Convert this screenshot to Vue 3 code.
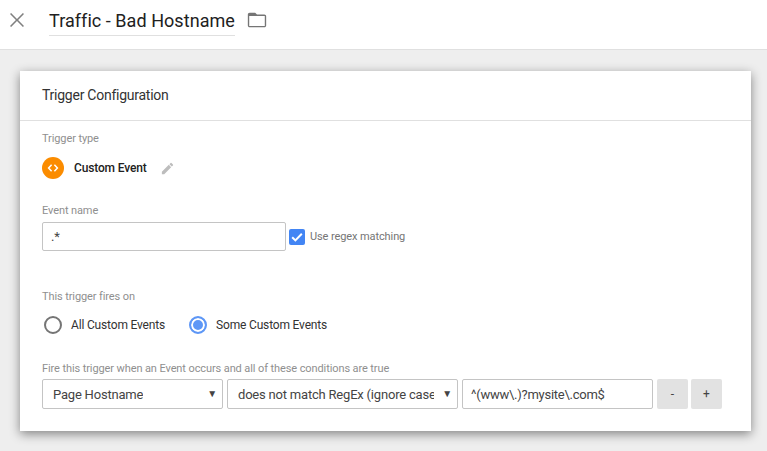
<template>
  <div class="page">
    <header class="top-bar">
      <button class="close-btn" aria-label="Close">
        <svg width="24" height="24" viewBox="0 0 24 24"><path d="M19 6.100 17.900 5 12 10.900 6.100 5 5 6.100 10.900 12 5 17.900 6.100 19 12 13.100 17.900 19 19 17.900 13.100 12z" fill="#808080" /></svg>
      </button>
      <div class="title">Traffic - Bad Hostname</div>
      <svg class="folder" width="22" height="22" viewBox="0 0 24 24"><path d="M20 6h-8l-2-2H4c-1.100 0-1.990.9-1.990 2L2 18c0 1.100.9 2 2 2h16c1.100 0 2-.9 2-2V8c0-1.100-.9-2-2-2zm.5 12.500H3.500V7.500h17v11z" fill="#757575" /></svg>
    </header>

    <main class="content">
      <section class="card">
        <h2 class="card-title">Trigger Configuration</h2>
        <div class="card-body">
          <div class="label">Trigger type</div>
          <div class="type-row">
            <span class="type-icon">
              <svg width="12" height="12" viewBox="0 0 12 12"><path d="M4.600 2.800 1.600 6l3 3.200M7.400 2.800l3 3.200-3 3.200" fill="none" stroke="#fff" stroke-width="1.500" /></svg>
            </span>
            <span class="type-name">Custom Event</span>
            <svg class="pencil" width="15" height="15" viewBox="0 0 24 24"><path d="M3 17.250V21h3.750L17.810 9.940l-3.750-3.750L3 17.250zM20.710 7.040a1 1 0 0 0 0-1.410l-2.340-2.340a1 1 0 0 0-1.410 0l-1.830 1.830 3.750 3.750 1.830-1.830z" fill="#bdbdbd" /></svg>
          </div>

          <div class="label event-label">Event name</div>
          <div class="event-row">
            <div class="field event-field">.*</div>
            <span class="checkbox">
              <svg width="16" height="16" viewBox="0 0 16 16"><path d="M3.200 8.200 6.400 11.400 12.800 4.800" fill="none" stroke="#fff" stroke-width="2" /></svg>
            </span>
            <span class="check-label">Use regex matching</span>
          </div>

          <div class="label fires-label">This trigger fires on</div>
          <div class="radio-row">
            <span class="radio"></span>
            <span class="radio-text">All Custom Events</span>
            <span class="radio checked"></span>
            <span class="radio-text">Some Custom Events</span>
          </div>

          <div class="label cond-label">Fire this trigger when an Event occurs and all of these conditions are true</div>
          <div class="cond-row">
            <div class="field select var-select"><span class="select-text">Page Hostname</span><span class="arrow">▼</span></div>
            <div class="field select op-select"><span class="select-text">does not match RegEx (ignore case)</span><span class="arrow">▼</span></div>
            <div class="field value-field">^(www\.)?mysite\.com$</div>
            <button class="small-btn">-</button>
            <button class="small-btn plus-btn">+</button>
          </div>
        </div>
      </section>
    </main>
  </div>
</template>

<script setup>
</script>

<style>
html,
body {
  margin: 0;
  background: #eeeeee;
}
</style>

<style scoped>
.page {
  width: 767px;
  height: 451px;
  overflow: hidden;
  background: #eeeeee;
  font-family: Roboto, "Liberation Sans", sans-serif;
  color: #212121;
}

.top-bar {
  display: flex;
  align-items: center;
  height: 49px;
  background: #fff;
  border-bottom: 1px solid #e0e0e0;
  padding-left: 5px;
}

.close-btn {
  display: flex;
  width: 24px;
  height: 24px;
  padding: 0;
  border: none;
  background: none;
  margin-top: -9px;
}

.title {
  margin-left: 20px;
  margin-top: -5px;
  padding-bottom: 1px;
  font-size: 18px;
  line-height: 26px;
  font-weight: 400;
  letter-spacing: 0.05px;
  border-bottom: 1px solid #e0e0e0;
}

.folder {
  margin-left: 11px;
  margin-top: -9px;
}

.content {
  padding: 21px 16px 0 20px;
}

.card {
  background: #fff;
  height: 360px;
  box-shadow: 0 3px 10px rgba(0, 0, 0, 0.45);
}

.card-title {
  margin: 0;
  padding: 0 22px;
  height: 49px;
  line-height: 49px;
  font-size: 14px;
  font-weight: 400;
  letter-spacing: -0.25px;
  color: #333;
  border-bottom: 1px solid #e0e0e0;
}

.card-body {
  padding: 11px 22px 0;
}

.label {
  font-size: 11px;
  line-height: 14px;
  letter-spacing: -0.1px;
  color: #8f8f8f;
}

.type-row {
  display: flex;
  align-items: center;
  height: 22px;
  margin-top: 11px;
}

.type-icon {
  display: flex;
  align-items: center;
  justify-content: center;
  width: 22px;
  height: 22px;
  border-radius: 50%;
  background: #fb8c00;
}

.type-name {
  margin-left: 10px;
  font-size: 12px;
  font-weight: 500;
  letter-spacing: -0.15px;
  color: #212121;
}

.pencil {
  margin-left: 13px;
}

.event-label {
  margin-top: 25px;
}

.event-row {
  display: flex;
  align-items: center;
  margin-top: 4px;
}

.field {
  box-sizing: border-box;
  display: flex;
  align-items: center;
  height: 30px;
  background: #fff;
  border: 1px solid #c4c4c4;
  border-radius: 2px;
  font-size: 13px;
  letter-spacing: -0.25px;
  color: #444;
}

.event-field {
  width: 244px;
  height: 29px;
  padding-left: 8px;
}

.checkbox {
  display: flex;
  width: 16px;
  height: 16px;
  margin-left: 3px;
  border-radius: 2px;
  background: #4285f4;
}

.check-label {
  margin-left: 5px;
  font-size: 11px;
  letter-spacing: -0.1px;
  color: #757575;
}

.fires-label {
  margin-top: 39px;
}

.radio-row {
  display: flex;
  align-items: center;
  height: 18px;
  margin-top: 12px;
  margin-left: 2px;
}

.radio {
  box-sizing: border-box;
  flex: none;
  width: 18px;
  height: 18px;
  border: 2px solid #757575;
  border-radius: 50%;
}

.radio.checked {
  border-color: #5e97f6;
  background: #5e97f6;
  box-shadow: inset 0 0 0 2px #fff;
}

.radio-text {
  margin-left: 9px;
  margin-right: 24px;
  font-size: 12px;
  letter-spacing: -0.17px;
  color: #333;
}

.cond-label {
  margin-top: 28px;
}

.cond-row {
  display: flex;
  gap: 4px;
  margin-top: 3px;
}

.select {
  position: relative;
  padding-left: 10px;
  letter-spacing: -0.2px;
}

.select-text {
  overflow: hidden;
  white-space: nowrap;
}

.var-select {
  width: 181px;
}

.op-select {
  width: 231px;
}

.op-select .select-text {
  flex: none;
  width: 196px;
}

.arrow {
  position: absolute;
  right: 5px;
  top: 8px;
  font-size: 10px;
  line-height: 12px;
  color: #444;
}

.value-field {
  width: 191px;
  padding-left: 8px;
}

.small-btn {
  width: 31px;
  height: 30px;
  padding: 0;
  border: none;
  border-radius: 2px;
  background: #e2e2e2;
  font-family: inherit;
  font-size: 12px;
  color: #444;
}

.plus-btn {
  margin-left: -1px;
}
</style>
